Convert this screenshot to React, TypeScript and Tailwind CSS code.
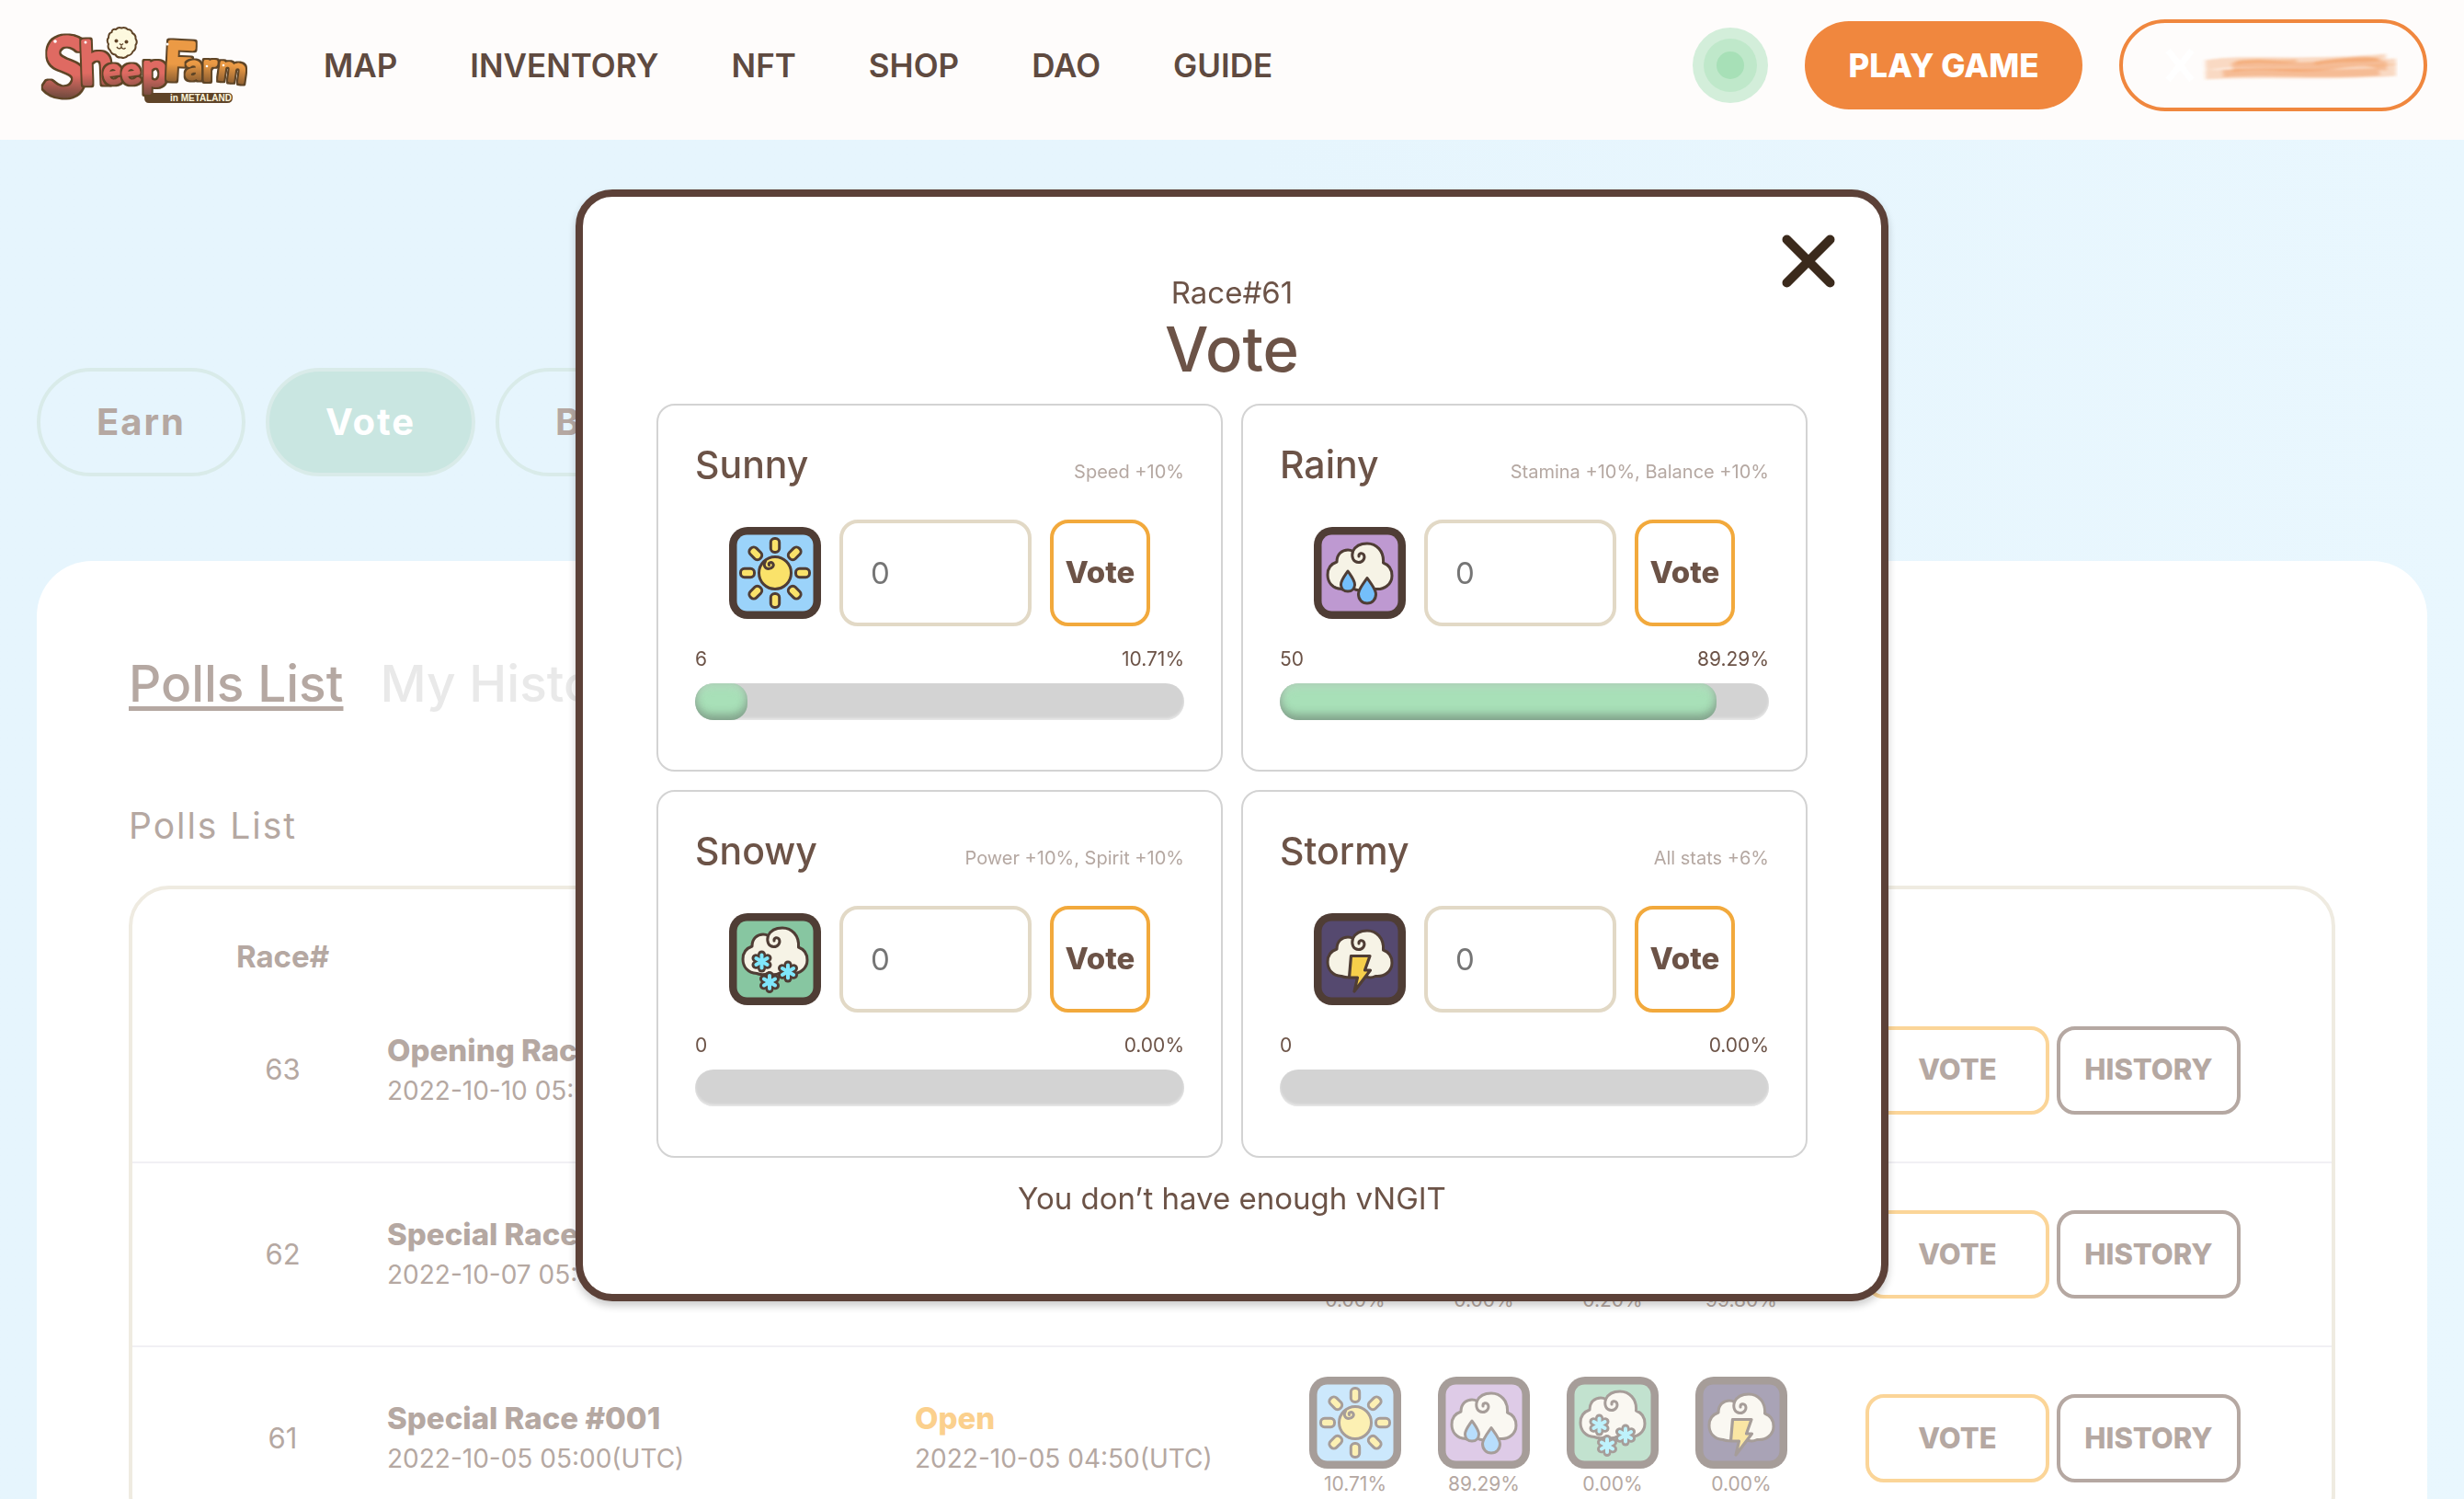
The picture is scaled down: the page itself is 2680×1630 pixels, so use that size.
import React from "react";

type Weather = "sunny" | "rainy" | "snowy" | "stormy";

const INK = "#4f3d35";

const CLOUD =
  "M30 67.500C20 67 15 60 15 52C15 45 19 40 25 38C25 29 31 25 37 25C39 25 41 25.500 42.500 26.500C45 21 51 18 58 18C68 18 76.500 26 75.500 39C81 41 85 46 85 53C85 62 77 68.500 67 67.500C63 69.500 58 69 55 67C51 69 46 69 43 67C39 69 34 69 30 67.500Z";

function Cloud({ y = 0 }: { y?: number }) {
  return (
    <g transform={`translate(0 ${y})`} stroke={INK} strokeWidth="3" strokeLinecap="round" strokeLinejoin="round">
      <path d={CLOUD} fill="#f6f3e6" />
      <path d="M42.500 26.500C40.500 33 43 38.500 48.500 38.500C53.500 38.500 56 34 54.500 30.500C53 27.500 48.500 28.500 49 32" fill="none" />
    </g>
  );
}

const FLAKE_ARMS = [0, 60, 120];

function Flake({ x, y }: { x: number; y: number }) {
  return (
    <g transform={`translate(${x} ${y})`} strokeLinecap="round">
      {FLAKE_ARMS.map((a) => (
        <line key={a} y1="-7.500" y2="7.500" transform={`rotate(${a})`} stroke={INK} strokeWidth="9" />
      ))}
      {FLAKE_ARMS.map((a) => (
        <line key={a} y1="-7" y2="7" transform={`rotate(${a})`} stroke="#7fe6fb" strokeWidth="4" />
      ))}
    </g>
  );
}

const TILE: Record<Weather, string> = {
  sunny: "#9bd3fa",
  rainy: "#be99d1",
  snowy: "#87c6a1",
  stormy: "#55496f",
};

function WeatherIcon({ kind, className = "" }: { kind: Weather; className?: string }) {
  return (
    <svg viewBox="0 0 100 100" className={`size-[100px] shrink-0 ${className}`} role="img" aria-label={kind}>
      <rect width="100" height="100" rx="20" fill={INK} />
      <rect x="8.500" y="8.500" width="83" height="83" rx="11" fill={TILE[kind]} />
      {kind === "sunny" && (
        <g stroke={INK} strokeWidth="3" fill="#fae26a" strokeLinecap="round">
          {[0, 45, 90, 135, 180, 225, 270, 315].map((a) => (
            <rect key={a} x="45.300" y="12.500" width="9.400" height="15" rx="4.200" transform={`rotate(${a} 50 50)`} />
          ))}
          <circle cx="50" cy="50" r="17.500" />
          <path d="M39.500 37.500C37 41 38.500 45.500 43 45.500C47 45.500 49.500 42 47.500 39.500C45.500 37.500 42.500 39 43.500 41.500" fill="none" />
        </g>
      )}
      {kind === "rainy" && (
        <>
          <Cloud />
          <g stroke={INK} strokeWidth="3" fill="#74bffa" strokeLinejoin="round">
            <path d="M37 48C33 54 29.500 58 29.500 62.500C29.500 67 32.500 70 37 70C41.500 70 44.500 67 44.500 62.500C44.500 58 41 54 37 48Z" />
            <path d="M58 55.500C53 62.500 48.500 68 48.500 73C48.500 79 52.500 83 58 83C63.500 83 67.500 79 67.500 73C67.500 68 63 62.500 58 55.500Z" />
          </g>
        </>
      )}
      {kind === "snowy" && (
        <>
          <Cloud y={-2} />
          <Flake x={35.5} y={52.5} />
          <Flake x={64} y={63.5} />
          <Flake x={44} y={75} />
        </>
      )}
      {kind === "stormy" && (
        <>
          <Cloud y={1} />
          <path
            d="M40.500 46.500H61L55.500 62H61.500L44 85L47.500 70H38.500Z"
            fill="#f6cf4b"
            stroke={INK}
            strokeWidth="3.200"
            strokeLinejoin="round"
          />
        </>
      )}
    </svg>
  );
}

const LOGO_LETTERS = [
  { c: "S", x: 46, y: 102, s: 86, w: 5, f: "url(#lg-red)", r: 3 },
  { c: "h", x: 88, y: 91, s: 62, w: 5, f: "url(#lg-red)", r: -2 },
  { c: "e", x: 114, y: 92, s: 38, w: 3, f: "url(#lg-red)", r: -8 },
  { c: "e", x: 134, y: 92, s: 38, w: 3, f: "url(#lg-red)", r: -8 },
  { c: "p", x: 155, y: 93, s: 48, w: 4, f: "url(#lg-red)", r: 0 },
  { c: "F", x: 179, y: 85, s: 54, w: 6, f: "url(#lg-orange)", r: 3 },
  { c: "a", x: 202, y: 86, s: 36, w: 3, f: "url(#lg-orange)", r: 0 },
  { c: "r", x: 221, y: 87, s: 38, w: 4, f: "url(#lg-orange)", r: 0 },
  { c: "m", x: 236, y: 86, s: 37, w: 3, f: "url(#lg-orange)", r: 8 },
];

function Logo() {
  return (
    <svg viewBox="32 24 248 94" className="h-[94px] w-[248px] shrink-0" role="img" aria-label="Sheep Farm in Metaland">
      <defs>
        <linearGradient id="lg-red" gradientUnits="userSpaceOnUse" x1="0" y1="40" x2="0" y2="106">
          <stop offset="0.600" stopColor="#df6a62" />
          <stop offset="1" stopColor="#6d4a3d" />
        </linearGradient>
        <linearGradient id="lg-orange" gradientUnits="userSpaceOnUse" x1="0" y1="44" x2="0" y2="94">
          <stop offset="0.500" stopColor="#eb9a45" />
          <stop offset="1" stopColor="#76502c" />
        </linearGradient>
        <filter id="lg-outline" x="-30%" y="-30%" width="160%" height="160%">
          <feMorphology in="SourceAlpha" operator="dilate" radius="2" result="fat" />
          <feFlood floodColor="#5f4428" />
          <feComposite in2="fat" operator="in" />
          <feMerge>
            <feMergeNode />
            <feMergeNode in="SourceGraphic" />
          </feMerge>
        </filter>
      </defs>
      <path d="M157 101H248Q253 101 253 106Q253 112 247 112H162Q157 112 157 106Z" fill="#5f4428" />
      <g fontFamily="Lato, sans-serif" fontWeight="400" strokeLinejoin="round" strokeLinecap="round">
        {LOGO_LETTERS.map((l, i) => (
          <g key={i} filter="url(#lg-outline)">
            <text
              x={l.x}
              y={l.y}
              fontSize={l.s}
              fill={l.f}
              stroke={l.f}
              strokeWidth={l.w}
              transform={`rotate(${l.r} ${l.x} ${l.y})`}
            >
              {l.c}
            </text>
          </g>
        ))}
      </g>
      <g fill="#fff">
        <circle cx="60" cy="45" r="1.800" />
        <circle cx="93" cy="46" r="1.500" />
        <circle cx="182" cy="48" r="1.500" />
        <circle cx="225" cy="72" r="1.300" />
        <circle cx="243" cy="71" r="1.300" />
      </g>
      <path
        d="M126 32Q129 29 132 30.500Q136 29 139 32Q143 32 144 36Q148 38 147.500 42Q150 46 147.500 49Q148 54 144.500 56Q143 60 139 60.500Q136 64 132 62.500Q127 63 125.500 59.500Q121 59 120 55Q116.500 52 118 48Q115.500 44 118 41Q118 36 121.500 35Q122 31 126 32Z"
        fill="#fdf9df"
        stroke="#5f4428"
        strokeWidth="2"
      />
      <circle cx="126.500" cy="44.500" r="2" fill="#5f4428" />
      <circle cx="137.500" cy="45.500" r="2" fill="#5f4428" />
      <path d="M130 47.500L132 49L134 47.500M132 49V51.500M127 51Q129.500 54.500 132 51.500Q134.500 54.500 136.500 52" fill="none" stroke="#5f4428" strokeWidth="1.300" />
      <text x="185" y="110" fontFamily="Liberation Sans, Arial, sans-serif" fontWeight="700" fontSize="10" fill="#fbf5dc">
        in METALAND
      </text>
    </svg>
  );
}

function Scribble() {
  return (
    <svg viewBox="0 0 260 40" className="h-10 w-[260px]" aria-hidden="true">
      <defs>
        <filter id="soft" x="-5%" y="-20%" width="110%" height="140%">
          <feGaussianBlur stdDeviation="2 1" />
        </filter>
      </defs>
      <path d="M10 4L36 36M36 4L10 36" stroke="#fff" strokeWidth="7" />
      <g filter="url(#soft)" fill="none" stroke="#f0873e">
        <path d="M51 18C100 10 150 20 247 11M51 22C100 14 170 24 258 16" strokeWidth="7" opacity="0.300" />
        <path d="M51 29C100 24 170 30 258 22M51 32C120 28 180 34 258 28" strokeWidth="7" opacity="0.300" />
        <path d="M80 22C120 15 140 27 190 19S230 19 248 21" strokeWidth="10" opacity="0.350" />
        <path d="M70 29C120 24 160 32 240 27" strokeWidth="8" opacity="0.350" />
        <path d="M84 17C110 12 130 18 150 15M170 18C195 12 215 16 240 13" strokeWidth="4" opacity="0.300" />
      </g>
    </svg>
  );
}

const NAV = ["MAP", "INVENTORY", "NFT", "SHOP", "DAO", "GUIDE"];

function Header() {
  return (
    <header className="relative z-20 flex h-[152px] items-center bg-[#fefcfb] pr-10 pb-[10px] pl-8">
      <a href="#home" className="shrink-0">
        <Logo />
      </a>
      <nav className="ml-[72px] flex gap-[79px] text-[35px] leading-[48px] font-semibold text-[#5f4a40]">
        {NAV.map((n) => (
          <a key={n} href={`#${n.toLowerCase()}`}>
            {n}
          </a>
        ))}
      </nav>
      <div className="ml-auto flex items-center gap-10">
        <div className="flex size-[82px] items-center justify-center rounded-full bg-[#d3eeda]">
          <div className="flex size-[58px] items-center justify-center rounded-full bg-[#bfe8ca]">
            <div className="size-[30px] rounded-full bg-[#a7e0b7]" />
          </div>
        </div>
        <button className="h-24 w-[302px] rounded-full bg-[#f0873e] text-[35px] font-extrabold whitespace-nowrap text-white">
          PLAY GAME
        </button>
        <button
          aria-label="Wallet account"
          className="flex h-[100px] w-[335px] items-center justify-end rounded-full border-4 border-[#f0873e] pr-7"
        >
          <Scribble />
        </button>
      </div>
    </header>
  );
}

type Race = { id: number; title: string; date: string; close: string; odds: [Weather, string][] };

const odds = (a: string, b: string, c: string, d: string): [Weather, string][] => [
  ["sunny", a],
  ["rainy", b],
  ["snowy", c],
  ["stormy", d],
];

const RACES: Race[] = [
  { id: 63, title: "Opening Race", date: "2022-10-10 05:00(UTC)", close: "2022-10-10 04:50(UTC)", odds: odds("0.00%", "0.00%", "0.00%", "0.00%") },
  { id: 62, title: "Special Race #002", date: "2022-10-07 05:00(UTC)", close: "2022-10-07 04:50(UTC)", odds: odds("0.00%", "0.00%", "0.20%", "99.80%") },
  { id: 61, title: "Special Race #001", date: "2022-10-05 05:00(UTC)", close: "2022-10-05 04:50(UTC)", odds: odds("10.71%", "89.29%", "0.00%", "0.00%") },
];

function PollsTable() {
  return (
    <div className="mt-[35px] overflow-hidden rounded-[44px] border-4 border-[#efebe1]">
      <table className="w-full table-fixed text-left text-[#b5a8a2]">
        <colgroup>
          <col className="w-[277px]" />
          <col className="w-[574px]" />
          <col className="w-[429px]" />
          <col className="w-[605px]" />
          <col className="w-[507px]" />
        </colgroup>
        <thead>
          <tr className="h-[97px] text-center align-bottom text-[33px] leading-[48px] font-extrabold">
            <th className="pl-[50px]">Race#</th>
            <th aria-label="Race" />
            <th aria-label="Status" />
            <th aria-label="Result" />
            <th aria-label="Actions" />
          </tr>
        </thead>
        <tbody>
          {RACES.map((r) => (
            <tr key={r.id} className="h-[200px] border-b-2 border-[#f1f0f4]">
              <td className="pl-[50px] text-center text-[31px]">{r.id}</td>
              <td className="leading-[44px] whitespace-nowrap">
                <div className="text-[33px] font-extrabold">{r.title}</div>
                <div className="text-[28px]">{r.date}</div>
              </td>
              <td className="leading-[44px] whitespace-nowrap">
                <div className="text-[33px] font-extrabold text-[#fbd08d]">Open</div>
                <div className="text-[28px]">{r.close}</div>
              </td>
              <td>
                <div className="flex gap-10">
                  {r.odds.map(([kind, pct]) => (
                    <div key={kind} className="flex w-[100px] flex-col items-center text-[21px] leading-[34px]">
                      <WeatherIcon kind={kind} className="opacity-50" />
                      {pct}
                    </div>
                  ))}
                </div>
              </td>
              <td>
                <div className="flex gap-2 text-[31px] font-extrabold">
                  <button className="h-24 w-[200px] rounded-[20px] border-4 border-[#fbd598]">VOTE</button>
                  <button className="h-24 w-[200px] rounded-[20px] border-4 border-[#b5a8a2]">HISTORY</button>
                </div>
              </td>
            </tr>
          ))}
        </tbody>
      </table>
    </div>
  );
}

const TAB = "h-[118px] rounded-full border-4 border-[#d9ebe9] px-[61px] text-[40px] font-bold tracking-wider";

function Page() {
  return (
    <main className="px-10 pt-[248px]">
      <div className="flex gap-[22px]">
        <button className={`${TAB} text-[#b5a8a2]`}>Earn</button>
        <button className={`${TAB} bg-[#c9e6e1] text-white`}>Vote</button>
        <button className={`${TAB} text-[#b5a8a2]`}>Boost</button>
      </div>
      <section className="mt-[92px] rounded-t-[60px] bg-white px-[100px] pt-[93px] pb-[100px]">
        <div className="flex gap-10 text-[55px] leading-[80px] font-medium">
          <a href="#polls" className="text-[#b5a8a2] underline decoration-[5px] underline-offset-[5px]">
            Polls List
          </a>
          <a href="#history" className="text-[#e9e9e9]">
            My History
          </a>
        </div>
        <h2 className="mt-[85px] text-[39px] leading-[60px] tracking-wider text-[#b5a8a2]">Polls List</h2>
        <PollsTable />
      </section>
    </main>
  );
}

type Option = { kind: Weather; name: string; bonus: string; votes: number; pct: number };

const OPTIONS: Option[] = [
  { kind: "sunny", name: "Sunny", bonus: "Speed +10%", votes: 6, pct: 10.71 },
  { kind: "rainy", name: "Rainy", bonus: "Stamina +10%, Balance +10%", votes: 50, pct: 89.29 },
  { kind: "snowy", name: "Snowy", bonus: "Power +10%, Spirit +10%", votes: 0, pct: 0 },
  { kind: "stormy", name: "Stormy", bonus: "All stats +6%", votes: 0, pct: 0 },
];

function VoteCard({ o }: { o: Option }) {
  return (
    <article className="rounded-[20px] border-2 border-[#d3d3d3] px-10 pt-10 pb-[54px]">
      <div className="flex items-baseline justify-between">
        <h3 className="text-[41px] leading-[48px] font-medium">{o.name}</h3>
        <span className="text-[20px] text-[#b5a8a2]">{o.bonus}</span>
      </div>
      <div className="mt-9 flex items-center justify-center gap-5">
        <WeatherIcon kind={o.kind} />
        <input
          type="text"
          placeholder="0"
          aria-label={`Votes for ${o.name}`}
          className="h-[116px] w-[209px] rounded-[20px] border-4 border-[#e2d9c6] bg-transparent px-[30px] text-[33px] placeholder:text-[#757575]"
        />
        <button className="h-[116px] w-[109px] rounded-[20px] border-4 border-[#f2a93c] text-[33px] font-extrabold">
          Vote
        </button>
      </div>
      <div className="mt-5 flex justify-between text-[21px] leading-8">
        <span>{o.votes}</span>
        <span>{o.pct.toFixed(2)}%</span>
      </div>
      <div className="mt-[10px] h-10 overflow-hidden rounded-[20px] bg-[#d3d3d3] shadow-[inset_0_-2px_3px_rgba(255,255,255,0.5)]">
        {o.pct > 0 && (
          <div
            className="h-full rounded-[18px] bg-[#a8e0b8] shadow-[inset_0_-6px_10px_rgba(70,70,70,0.4),inset_0_4px_10px_rgba(200,200,200,0.4)]"
            style={{ width: `${o.pct}%` }}
          />
        )}
      </div>
    </article>
  );
}

function VoteDialog() {
  return (
    <div className="fixed inset-0 z-10 flex items-start justify-center pt-[206px]">
      <div
        role="dialog"
        aria-modal="true"
        aria-labelledby="vote-title"
        className="relative w-[1428px] max-w-full rounded-[40px] border-8 border-[#5c4138] bg-white p-20 text-center text-[#6c5347] shadow-[0_5px_9px_rgba(0,0,0,0.2)]"
      >
        <button aria-label="Close" className="absolute top-10 right-[49px]">
          <svg viewBox="0 0 60 60" className="size-[60px]" stroke="#3b2a1c" strokeWidth="10" strokeLinecap="round">
            <path d="M6.500 6.500L53.500 53.500M53.500 6.500L6.500 53.500" />
          </svg>
        </button>
        <p className="text-[33px] leading-[48px]">Race#61</p>
        <h1 id="vote-title" className="text-[67px] leading-[76px] font-medium">
          Vote
        </h1>
        <div className="mt-[21px] grid grid-cols-2 gap-5 text-left">
          {OPTIONS.map((o) => (
            <VoteCard key={o.kind} o={o} />
          ))}
        </div>
        <p className="mt-5 text-[33px] leading-[48px]">You don’t have enough vNGIT</p>
      </div>
    </div>
  );
}

export default function App() {
  return (
    <div className="h-screen overflow-hidden bg-linear-to-r from-[#e6f5fd] via-[#e6f5fd] to-[#e9f7fe] font-['Inter',sans-serif]">
      <Header />
      <Page />
      <VoteDialog />
    </div>
  );
}
